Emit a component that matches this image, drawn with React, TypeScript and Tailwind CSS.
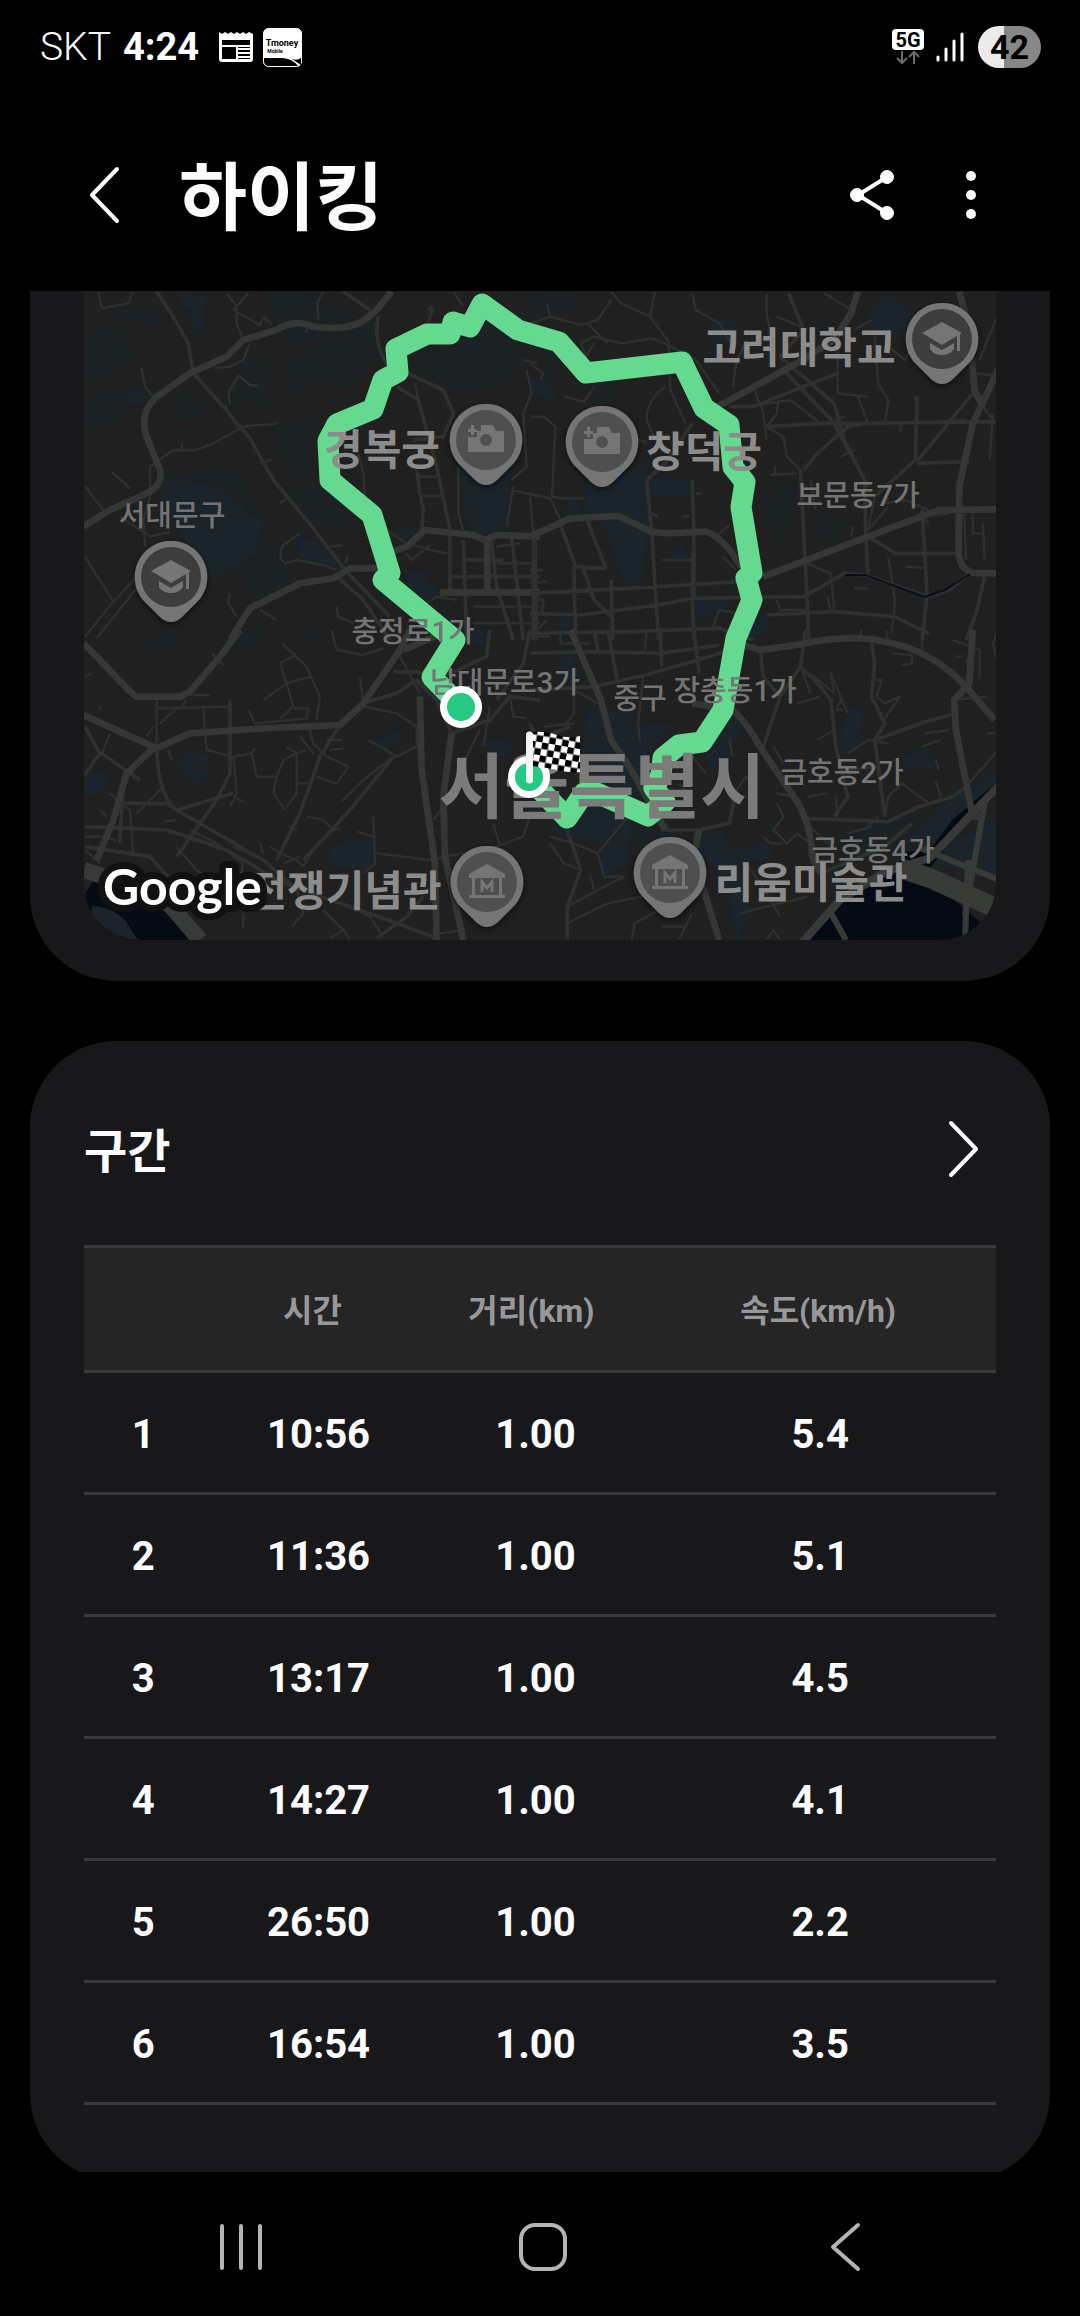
import type { ReactNode } from 'react';
import { clsx } from 'clsx';

const SECTIONS = [
  { no: 1, time: '10:56', distance: '1.00', speed: '5.4' },
  { no: 2, time: '11:36', distance: '1.00', speed: '5.1' },
  { no: 3, time: '13:17', distance: '1.00', speed: '4.5' },
  { no: 4, time: '14:27', distance: '1.00', speed: '4.1' },
  { no: 5, time: '26:50', distance: '1.00', speed: '2.2' },
  { no: 6, time: '16:54', distance: '1.00', speed: '3.5' },
];

const ROUTE =
  '461,707 432,677 455,640 383,580 390,573 372,515 330,480 328,441 337,424 373,409 383,380 398,372 396,349 427,334 450,334 453,322 470,327 482,304 518,330 559,342 586,373 682,362 704,408 729,425 733,467 745,482 741,507 752,573 746,578 752,600 736,638 723,710 702,742 679,745 663,758 661,775 654,788 665,802 648,816 597,793 584,793 567,818 547,797 529,777';

// Each tile covers one quarter of the map and keeps its own coordinates.
const TILES = [
  {
    transform: 'translate(30 280) scale(.3333)',
    parks: [
      'M450 40L530 50 520 160 495 165 480 90 450 75z',
      'M300 325L350 335 340 375 295 370z',
      'M400 600L440 590 500 610 560 620 620 660 650 695 700 730 680 790 690 820 600 870 540 900 520 850 440 740 390 640z',
      'M805 770L860 790 920 850 935 880 870 850 820 840z',
      'M1290 570L1445 570 1425 740 1390 770 1310 740z',
      'M1090 760L1150 735 1165 745 1125 780z',
      'M1125 870L1180 880 1230 940 1180 965 1135 935z',
      'M1480 285L1525 300 1530 340 1500 320z',
    ],
    woods: [
      'M165 180L220 130 280 160 320 230 250 270 200 310 165 290z',
      'M230 90L370 80 400 140 330 130 260 110z',
      'M720 90L870 60 960 110 930 170 780 190 740 150z',
      'M850 200L1040 130 1050 230 960 330 860 300 780 340 770 260z',
      'M1140 240L1440 120 1500 230 1420 320 1260 330 1180 270z',
      'M640 230L720 260 700 380 640 360 600 410z',
      'M430 330L520 380 500 430 440 410z',
      'M740 450L860 400 880 560 790 600 750 520z',
      'M620 760L760 790 790 900 700 960 620 900z',
      'M700 40L860 40 850 90 740 110z',
      'M165 380L230 330 300 360 260 430 180 440z',
      'M430 590L600 560 700 700 690 780 620 640 500 660z',
      'M780 640L870 620 960 680 940 760 850 720z',
    ],
    major: [
      'M160 740L240 690 340 645Q400 620 390 570L350 470Q325 400 380 350L480 280 590 230 640 180 740 150Q790 115 850 140Q960 155 1010 115L1040 90 1085 35',
      'M600 1080L660 985 810 910 910 895 960 865 1050 865',
      'M1045 830L1130 800 1185 750 1330 765 1365 780 1400 765 1530 770',
      'M1372 770L1372 940M1230 937L1530 937',
    ],
    mid: [
      'M380 35L430 110 475 190 490 280 580 380 660 475 730 600 850 745 945 870 1080 1010',
      'M1045 110Q1030 190 1070 250L1240 330 1270 400 1240 470 1150 480',
      'M940 35L1020 90',
      'M1100 320L1165 360 1220 560 1260 750 1260 940',
      'M1160 570L1170 640 1180 690 1175 750',
      'M1300 780L1310 1080M1385 780L1400 920 1450 1080M1445 770L1480 1080M1515 770L1520 1080',
      'M920 890L1000 960 1080 1080',
      'M1260 890L1530 890M1300 840L1420 840',
    ],
    minor: [
      'M205 35L215 85 295 70 308 35',
      'M335 265L345 320 370 350M600 370L595 340 625 285 660 315 685 318',
      'M585 375L620 440M360 560L430 510 500 510 550 490 640 440 745 430',
      'M245 575L300 625M165 620L220 690M165 830L250 965 330 880M165 1070L250 965M200 1075L340 900',
      'M360 560L360 650 340 720 345 800M270 710L360 770 420 755',
      'M555 265L600 260 640 240 660 190M590 40L620 80 620 130 640 180',
      'M655 40L610 90 690 135 700 110 725 135M865 120L862 70 880 35M830 140L830 160',
      'M1190 85L1210 90 1195 125 1205 75M1270 35L1300 80M1155 310L1165 360',
      'M985 520L1000 580 1005 660M810 760L760 795Q740 830 765 850L800 840 880 855 920 870',
      'M900 800L935 795M945 850L955 830M750 670L780 650M690 550L725 540M455 490L455 510',
      'M600 940L595 970 620 1010M690 990L740 1020M920 980L925 1010 970 1030',
      'M1480 240L1520 250M1490 270L1505 340 1480 400 1490 560 1445 600M1445 630L1530 650',
      'M1070 750L1130 790 1200 810 1250 820M1130 820L1145 840 1200 795M1190 970L1220 950 1280 960',
      'M1160 590L1220 590M1175 648L1240 648M1400 800L1470 790M1400 850L1520 850M1330 980L1530 980M1330 1030L1530 1030',
      'M1285 560L1285 700 1300 750M1450 620L1430 740M1500 650L1510 760',
    ],
  },
  {
    transform: 'translate(530 280) scale(.338 .3333)',
    parks: [
      'M1010 90L1060 40 1110 80 1150 130 1110 170 1040 150 1000 140z',
      'M175 600L345 550 350 740 330 910 280 915 250 830 220 740 160 690z',
      'M355 590L470 600 480 650 355 650z',
      'M420 810L445 790 475 835 415 835z',
      'M0 300L60 310 80 360 20 350z',
      'M485 965L590 965 580 1000 500 1010z',
      'M640 1005L690 1000 715 1030 700 1060 640 1075z',
      'M90 1005L120 1010 115 1055 88 1055z',
      'M530 110L620 130 610 180 540 190z',
      'M110 660L145 655 150 710 110 705z',
    ],
    woods: [
      'M0 40L140 40 130 80 0 120z',
      'M180 310L250 300 240 370 190 370z',
      'M700 660L780 600 770 760 740 770 700 710z',
      'M845 690L930 740 880 790 850 760z',
      'M40 230L80 220 70 310 30 300z',
    ],
    major: [
      'M1385 270L1310 430 1270 620 1268 820Q1275 875 1320 880L1385 880',
      'M1270 35L1300 150 1315 330 1340 380',
      'M0 770L120 715 260 708 360 755 400 760 520 755Q570 770 625 860',
      'M690 890L1000 770 1210 690 1385 688',
      'M555 380L780 255 900 180 950 100 970 35',
    ],
    mid: [
      'M0 940L380 920 620 905M0 1000L150 1005 380 975 480 955 810 950 930 880 990 885 1180 950 1240 930 1300 880',
      'M345 600L360 755 380 1080M240 900L245 1080M130 860L135 1080M10 760L10 1080',
      'M480 600L485 755 480 960 485 1080M345 600L400 550 480 430',
      'M85 720L135 860 225 865M155 860L190 960 240 1010M165 710L225 865',
      'M765 40L810 150 740 230 900 370 930 480 990 600 993 760 1000 890',
      'M750 270L900 430 1000 620M590 380L660 380 910 280',
      'M700 440L860 430 1000 430 1385 425M810 570L850 520 940 440 990 430',
      'M1000 770L1080 820 1260 820M1145 545L1310 340M1145 550L1300 545M1145 350L1140 540 1020 650',
      'M800 570L820 960 825 1080M1345 890L1320 1000 1290 1080M1160 690L1175 940 1160 1080',
      'M485 755L485 960M0 1060L300 1055 560 1045 660 1080M700 1005L900 995 1080 1010 1180 1060',
    ],
    minor: [
      'M240 35L270 70 355 110 370 35M355 110L410 185 415 330 460 430',
      'M50 70L60 110 150 135 200 120 240 60M60 110L0 130M150 190L190 170 270 190 360 175 410 195 490 240 560 340',
      'M150 190L165 230 190 190M170 130L230 190M100 350L160 365 190 320M0 410L40 410 75 440 65 650',
      'M0 250L40 280 30 300M345 420Q345 360 400 320M345 420L370 480',
      'M480 40L490 90 560 130 600 200M700 40L700 100 720 200M870 40L950 90M730 110L800 140',
      'M600 320L610 250 640 180M665 330L690 400 700 480M735 360L730 400 700 440 750 470 760 530 800 570',
      'M1020 170L1030 310 1060 360 1050 430M910 200L910 340 1000 350M960 150L1010 120M1060 200L1110 240 1130 200',
      'M970 350L1000 430M840 320L900 370M640 380L770 360 860 430M1140 350L1145 420M1100 425L1095 455M900 420L930 410M920 530L960 510',
      'M360 700L380 710M450 710L475 708M490 640L510 640M710 585L790 580M725 560L725 585M550 770L590 735M570 830L610 870M810 800L810 820',
      'M65 650L100 655 160 655M0 640L60 655 90 720M0 910L50 905M0 870L40 870M830 600L845 690M955 740L950 770',
      'M1285 700L1290 840M1310 700L1310 760 1340 760M1340 730L1345 840M1110 860L1170 865M1050 670L1110 660 1200 700M1150 700L1180 730M1060 830L1080 960M960 925L1000 925',
      'M820 850L890 880 900 990M730 960L740 990 820 990M540 1045L560 990 640 1005M1240 700L1160 710M1385 100L1330 240M1310 280L1370 285 1385 250M1310 340L1370 420',
      'M390 840L480 840M320 480L345 485M880 950L890 1000M1080 960L1070 1060M10 960L40 960 35 1000M20 1050L50 1020',
      'M1370 400L1360 540M1290 420L1200 425M1020 650L1000 750 1060 680',
    ],
  },
  {
    transform: 'translate(30 630) scale(.3333)',
    parks: [
      'M440 400L480 365 540 375 530 420 545 435 510 465 440 420z',
      'M900 660L950 630 1030 620 1025 690 1035 710 950 720 895 700z',
      'M165 440L215 420 245 455 200 500 160 490z',
      'M1045 330L1110 300 1110 330 1070 355 1040 345z',
      'M1150 160L1190 150 1205 210 1170 205z',
      'M1370 335L1420 325 1460 355 1420 385 1375 365z',
      'M1310 0L1360 0 1365 45 1310 45z',
    ],
    woods: ['M330 60L400 0 430 0 440 60 380 60z', 'M600 60L650 0 710 0 690 40z', 'M790 0L880 0 870 30z'],
    major: [
      'M160 40L200 80 300 185 320 200 450 200 480 185 570 80 630 0',
      'M160 255L380 355 480 310 700 295 930 285 1000 220 1110 60 1140 0',
      'M370 355L290 430 250 570 200 690',
      'M1170 200L1175 420 1215 700 1220 930M1240 500L1245 680 1300 930',
      'M1260 0L1120 60M1265 310L1240 500',
    ],
    mid: [
      'M165 590L410 600 590 660 760 760 1100 880 1220 925',
      'M380 355Q385 500 440 540L700 690 800 780M930 285L870 380 810 550 740 690',
      'M1000 220L1100 190 1160 150 1220 210 1265 310M1265 310L1380 270 1440 200 1530 210',
      'M270 520L410 520 440 540 610 490M280 440L270 640',
      'M1040 925L1130 860 1180 800M440 770L360 680 165 650',
      'M1380 0L1370 80 1260 130 1090 125M1500 0L1480 100 1400 210',
      'M440 680L560 510 600 430 600 220M820 690L960 540 1090 380',
      'M165 290L210 370 160 440M215 370L330 450',
    ],
    minor: [
      'M380 210L380 350M380 235L600 230M465 210L460 235M390 280L440 235M520 235L530 360 610 380 620 490 600 530M610 500L640 515',
      'M540 195L480 195M600 210L600 250M545 70L580 105M165 140L185 130M210 230L210 240',
      'M750 100L795 75 760 45 830 110 870 200 860 270M750 100L770 160 790 230 750 265M770 160L840 140M700 210L770 160M655 240L675 280 830 265 835 235 790 235',
      'M610 380L665 370 675 355M665 370L680 440 740 440 760 390 800 370 830 360M740 440L730 490 765 540M800 370L800 490 770 530M800 460L835 460',
      'M835 285L850 340 890 380 955 410 920 460 860 440M890 330L935 330M900 360L940 355M770 350L800 370M810 320L850 370',
      'M1000 230L1100 250 1160 290 1160 350 1100 380 1060 355 1015 330M1090 380L1000 450 935 515M990 140L1000 220',
      'M830 560L880 570 910 600 850 660 820 710M910 600L930 595M1030 560L1035 700 1000 730M980 605L1030 620M1040 670L1200 690 1400 650 1480 620 1500 560',
      'M165 620L220 620 260 630M240 490L300 540 310 680M320 550L400 470M165 660L210 700M210 540L230 560',
      'M260 310L280 320M240 310L215 370M415 360L425 390M350 320L370 290',
      'M610 650L700 690M720 650L750 670 800 690 820 710M700 670L690 640M760 700L810 680M780 590L800 600',
      'M800 780L820 850 785 890M640 850L640 895M880 840L940 900 960 930M940 900L900 925M960 830L1020 860 1060 920M1230 910L1300 900',
      'M440 570L400 575M440 650L500 720 560 770M560 640L640 700 620 800M480 600L560 640',
      'M905 0L920 60 1000 75 1060 55M1110 80L1170 190M1380 230L1360 350M1440 200L1450 260 1490 265M1390 580L1410 650M1350 300L1290 420 1270 500M1210 570L1250 520',
    ],
  },
  {
    transform: 'translate(530 630) scale(.338 .3333)',
    parks: [
      'M90 80L120 60 150 140 130 180 90 110z',
      'M170 250L310 240 300 300 380 280 430 290 350 360 300 560 290 700 215 740 210 640 120 620 50 600 130 560 200 500 150 380z',
      'M590 260L630 290 590 380 530 430 520 380z',
      'M940 235L985 235 980 310 965 360 920 365 920 320z',
      'M1100 380L1190 350 1180 390 1200 410 1120 420z',
      'M510 610L560 600 600 660 700 640 720 680 620 700 600 640 640 780 660 860 610 925 590 800 540 700 500 670z',
      'M1280 620L1385 560 1385 740 1180 700z',
      'M1270 480L1385 430 1385 470 1200 640 1100 640 1160 590z',
    ],
    woods: ['M300 620L440 560 420 680 330 700z', 'M880 640L1060 570 1230 530 1160 640 990 680z', 'M250 530L340 500 330 640z', 'M690 590L740 530 720 620z'],
    major: [
      'M480 220L600 240Q650 290 680 350L780 500Q830 570 835 680L860 730',
      'M500 600L485 680 520 800 560 930',
      'M620 40L680 60 790 45Q940 10 1050 35Q1190 60 1290 170L1375 270',
      'M1310 0L1300 160 1255 210 1260 300 1310 560 1340 560',
      'M120 0L210 210 240 330 300 420 400 600',
    ],
    mid: [
      'M0 180L190 170 340 135 480 95 620 50M0 70L180 65 390 70 560 45',
      'M230 0L260 160M385 0L390 110M485 0L500 130M190 0L200 60',
      'M815 0L800 110 740 200 690 350M740 200L690 140 680 50M800 110L860 170 890 210 905 350 940 500 900 560',
      'M820 565L1060 575 1150 530 1250 500 1290 470M1020 330L1170 275 1260 250',
      'M400 600L500 600 590 580 610 480M110 600L150 720 110 830 110 930',
      'M1010 40L1020 100 1010 200 1050 280 1020 330 1050 560',
      'M860 730L1050 650 1130 580M0 280L20 330 120 290',
    ],
    minor: [
      'M1160 0L1160 60M1055 0L1055 40M980 0L975 30M345 0L340 60M90 0L90 40 180 40M0 20L60 20',
      'M335 140L320 280 325 335M200 220L130 180 130 250 100 290M40 290L130 280',
      'M1020 150L1040 150 1025 200 1050 220 1095 200 1050 265M1070 70L1130 75 1130 100 1100 105M1250 30L1330 60 1330 140M1260 80L1280 80M1310 40L1290 100',
      'M830 130L900 190 890 130 940 250M800 110L830 190M790 220L860 200M920 210L905 240 925 240',
      'M940 370L1000 330 1060 340M850 330L900 300M940 420L1030 410M1170 310L1240 300M1160 350L1215 330M1200 390L1210 420M1350 310L1385 310M1250 210L1350 200',
      'M610 480L640 440 660 470M730 490L780 500M730 520L750 560 720 600 760 640 790 610 830 640M690 620L710 640 750 640M905 500L910 560M820 500L880 490M990 600L1030 560M940 610L1010 590',
      'M60 620L130 640 200 670 220 740 280 740M200 670L290 560M60 640L100 700 150 720M180 740L190 780M110 830L220 770 280 740',
      'M110 880L230 820 330 800M300 930L310 880 400 830 470 790M390 890L460 890M440 930L480 850M700 930L720 900 740 930M640 700L700 790 740 860M620 850L700 830 820 800',
      'M1050 560L1060 500 1100 460 1180 520M1215 500L1200 450M1385 360L1290 470M1385 0L1370 40 1385 110',
      'M480 380L520 430M440 460L460 480M590 330L600 380M720 350L750 400M830 590L880 640 900 620',
    ],
  },
];

type LabelSpec = { text: string; x: number; y: number; kind: 'place' | 'district' | 'city' };

// x is the middle of the label, y its baseline.
const LABELS: LabelSpec[] = [
  { text: '서울특별시', x: 602, y: 812, kind: 'city' },
  { text: '서대문구', x: 172, y: 526, kind: 'district' },
  { text: '보문동7가', x: 858, y: 506, kind: 'district' },
  { text: '충정로1가', x: 413, y: 642, kind: 'district' },
  { text: '남대문로3가', x: 505, y: 693, kind: 'district' },
  { text: '중구', x: 640, y: 709, kind: 'district' },
  { text: '장충동1가', x: 735, y: 701, kind: 'district' },
  { text: '금호동2가', x: 842, y: 783, kind: 'district' },
  { text: '금호동4가', x: 873, y: 861, kind: 'district' },
  { text: '고려대학교', x: 799, y: 363, kind: 'place' },
  { text: '경복궁', x: 382, y: 465, kind: 'place' },
  { text: '창덕궁', x: 704, y: 467, kind: 'place' },
  { text: '전쟁기념관', x: 345, y: 906, kind: 'place' },
  { text: '리움미술관', x: 811, y: 898, kind: 'place' },
];

function SchoolGlyph() {
  return (
    <g fill="#757575">
      <path d="M0-17L20-6 0 6-20-6z" />
      <path d="M-12 4L0 11 12 4V10Q8 16 0 16T-12 10z" />
      <path d="M15-5H18V12H15z" />
    </g>
  );
}

function CameraGlyph() {
  return (
    <g fill="#757575">
      <path fillRule="evenodd" d="M-18 12V-3H-9V-9H-5V-15H7L10-9H18V12zM0-6A6 6 0 1 0 0 6 6 6 0 1 0 0-6z" />
      <path d="M-15-15H-12V-11H-9V-8H-12V-5H-15V-8H-18V-11H-15z" />
    </g>
  );
}

function MuseumGlyph() {
  return (
    <g fill="#757575">
      <path d="M0-18L18-8V-4H-18V-8z" />
      <path d="M-15-5H-12V13H-15zM12-5H15V13H12zM-18 13H18V16H-18z" />
      <path d="M-5 10V0L0 6 5 0V10" fill="none" stroke="#757575" strokeWidth="3" />
    </g>
  );
}

function Pin({ x, y, dark, children }: { x: number; y: number; dark?: boolean; children: ReactNode }) {
  return (
    <g transform={`translate(${x} ${y})`} filter="url(#pin-shadow)">
      <path d="M0-36A36 36 0 0 1 28 23L11 40Q0 50-11 40L-28 23A36 36 0 0 1 0-36z" fill="#757575" />
      <circle r="30" fill={dark ? '#3d3d3d' : '#505050'} />
      {children}
    </g>
  );
}

function RouteMap() {
  return (
    <svg
      viewBox="84 291 912 649"
      className="block w-full rounded-b-[56px] bg-[#202020]"
      role="img"
      aria-label="하이킹 경로"
    >
      <defs>
        <filter id="pin-shadow" x="-30%" y="-30%" width="160%" height="160%">
          <feDropShadow dx="0" dy="2" stdDeviation="3" floodColor="#000" floodOpacity="0.6" />
        </filter>
        <pattern id="checker" width="13" height="13" patternUnits="userSpaceOnUse" patternTransform="rotate(10)">
          <path d="M0 0H13V13H0z" fill="#fff" />
          <path d="M0 0H6.5V6.5H0zM6.5 6.5H13V13H6.5z" fill="#000" />
        </pattern>
      </defs>

      {TILES.map((tile) => (
        <g key={tile.transform} transform={tile.transform}>
          <path d={tile.woods.join('')} fill="#1c2223" />
          <path d={tile.parks.join('')} fill="#1a242a" />
        </g>
      ))}
      <g fill="#060a15">
        <path d="M86 892L94 880 166 900 180 915 188 940H84z" />
        <path d="M806 940L830 908 880 875 925 876 996 935V940z" />
        <path d="M930 850L952 820 996 783V795L950 842 930 868 890 880 905 852z" />
      </g>
      <path d="M92 906Q110 906 125 920L138 940H110L92 922z" fill="#1a242a" />
      <g fill="none" stroke="#383a37" strokeLinejoin="round">
        <path d="M84 870L130 885 170 905 200 940" strokeWidth="16" />
        <path d="M800 945L840 900 885 872 930 858 985 800 1000 785" strokeWidth="8" />
        <path d="M900 868L930 878 1000 910" strokeWidth="20" />
        <path d="M920 848L1000 880M965 915L985 800M968 860L965 940M828 908L846 940" strokeWidth="6" />
      </g>

      {TILES.map((tile) => (
        <g key={tile.transform} transform={tile.transform} fill="none" strokeLinejoin="round">
          <path d={tile.minor.join('')} stroke="#2e302e" strokeWidth="7" />
          <path d={tile.mid.join('')} stroke="#2f312e" strokeWidth="11" />
          <path d={tile.major.join('')} stroke="#353734" strokeWidth="20" />
        </g>
      ))}
      <path d="M845 575L865 575 925 597 945 590 970 574" fill="none" stroke="#0a0e1a" strokeWidth="2" />

      <polyline points={ROUTE} fill="none" stroke="#65d990" strokeWidth="21" strokeLinejoin="round" />

      {LABELS.map(({ text, x, y, kind }) => (
        <text
          key={text}
          x={x}
          y={y}
          textAnchor="middle"
          className={clsx(
            kind === 'city' && 'fill-[#7b7b7b] text-[71px] font-bold',
            kind === 'district' && 'fill-[#747474] text-[29px] font-medium',
            kind === 'place' && 'fill-[#8c8c8c] text-[42px] font-bold',
          )}
        >
          {text}
        </text>
      ))}

      <Pin x={942} y={339} dark><SchoolGlyph /></Pin>
      <Pin x={171} y={577} dark><SchoolGlyph /></Pin>
      <Pin x={486} y={440}><CameraGlyph /></Pin>
      <Pin x={602} y={442}><CameraGlyph /></Pin>
      <Pin x={487} y={882}><MuseumGlyph /></Pin>
      <Pin x={670} y={873}><MuseumGlyph /></Pin>

      <g fill="#24c982" stroke="#fff" strokeWidth="7">
        <circle cx="461" cy="707" r="17.5" />
        <circle cx="529" cy="777" r="17.5" />
      </g>
      <path d="M532 732Q546 731 557 735T580 736V772Q570 773 557 770T532 766z" fill="url(#checker)" />
      <path d="M529.500 735V780" stroke="#f4f4f4" strokeWidth="7" strokeLinecap="round" />

      <text
        x="103"
        y="905"
        fill="#fff"
        stroke="#111"
        strokeWidth="14"
        strokeLinejoin="round"
        paintOrder="stroke"
        className="font-['Lato','Noto_Sans',sans-serif] text-[50px] font-bold"
      >
        Google
      </text>
    </svg>
  );
}

function StatusBar() {
  return (
    <div className="flex h-[94px] items-center justify-between pr-[39px] pl-10">
      <div className="flex items-center">
        <span className="text-[39px] leading-none font-light">SKT</span>
        <span className="ml-3 text-[38px] leading-none font-bold">4:24</span>
        <svg width="34" height="30" viewBox="0 0 34 30" className="ml-5" aria-hidden="true">
          <path d="M0 0L3 2 6 0 9 2 12 0 15 2 18 0 21 2 24 0 27 2 30 0 34 2V27Q34 30 31 30H3Q0 30 0 27z" fill="#fff" />
          <path d="M3 8H31V13H3zM3 15H17V27H3zM19 15H31V16H19zM19 18H31V20H19zM19 22H31V24H19zM19 26H31V27H19z" fill="#000" />
        </svg>
        <svg width="39" height="39" viewBox="0 0 39 39" className="ml-2.5" aria-hidden="true">
          <rect x=".5" y=".5" width="38" height="38" rx="5" fill="#fff" stroke="#fff" />
          <path d="M1 30H20Q30 31 35 38H6Q1 38 1 33zM29 31Q34 33 38 30V37Z" fill="#000" />
          <text x="19" y="18" textAnchor="middle" className="text-[9px] font-bold">Tmoney</text>
          <text x="12" y="25" textAnchor="middle" className="text-[5px] font-bold">Mobile</text>
        </svg>
      </div>
      <div className="flex items-center">
        <div className="flex flex-col items-center">
          <span className="flex h-[21px] w-8 items-center justify-center rounded bg-white text-[20px] leading-none font-bold text-black">
            5G
          </span>
          <svg width="24" height="15" viewBox="0 0 24 15" fill="none" stroke="#6b6b6b" strokeWidth="2" aria-hidden="true">
            <path d="M6 1V13M1 8L6 13 11 8M18 14V2M13 7L18 2 23 7" />
          </svg>
        </div>
        <svg width="28" height="30" viewBox="0 0 28 30" className="ml-3" stroke="#fff" strokeWidth="3" strokeLinecap="round" aria-hidden="true">
          <path d="M2 25V28M10 17V28M18 9V28M26 2V28" />
        </svg>
        <span className="ml-3.5 flex h-[42px] w-[63px] items-center justify-center rounded-full bg-linear-to-r from-[#ebebeb] from-42% to-[#878787] to-42% text-[34px] leading-none font-bold text-black">
          42
        </span>
      </div>
    </div>
  );
}

function TopBar() {
  return (
    <header className="flex h-[197px] items-center pt-1 pr-[100px] pl-[82px]">
      <button type="button" aria-label="뒤로" className="flex w-11 justify-center">
        <svg width="32" height="58" viewBox="0 0 32 58" fill="none" stroke="#fcfcff" strokeWidth="4" strokeLinecap="round" strokeLinejoin="round">
          <path d="M29 3L4 29 29 55" />
        </svg>
      </button>
      <h1 className="ml-[53px] pt-2 text-[74px] leading-none font-bold text-[#fcfcff]">하이킹</h1>
      <button type="button" aria-label="공유" className="ml-auto">
        <svg width="44" height="52" viewBox="0 0 44 52" fill="#fcfcff" stroke="#fcfcff">
          <path d="M37 8L8 26 37 44" fill="none" strokeWidth="4" />
          <circle cx="37" cy="8" r="6.500" />
          <circle cx="7" cy="26" r="6.500" />
          <circle cx="37" cy="44" r="6.500" />
        </svg>
      </button>
      <button type="button" aria-label="더보기" className="ml-[68px]">
        <svg width="18" height="52" viewBox="0 0 18 52" fill="#fcfcff">
          <circle cx="9" cy="7" r="5" />
          <circle cx="9" cy="26" r="5" />
          <circle cx="9" cy="45" r="5" />
        </svg>
      </button>
    </header>
  );
}

function SectionTable() {
  return (
    <table className="w-full table-fixed border-collapse text-center">
      <colgroup>
        <col className="w-[13%]" />
        <col className="w-[25%]" />
        <col className="w-[23%]" />
        <col className="w-[39%]" />
      </colgroup>
      <thead>
        <tr className="h-[125px] border-y-3 border-[#3a3a3c] bg-[#252525] text-[32px] text-[#98989b]">
          <th scope="col" aria-label="번호" />
          <th scope="col" className="pt-1 pr-2 font-bold">시간</th>
          <th scope="col" className="pt-1 pr-2 font-bold">거리(km)</th>
          <th scope="col" className="pt-1 font-bold">속도(km/h)</th>
        </tr>
      </thead>
      <tbody className="text-[40px] text-[#fcfcff]">
        {SECTIONS.map((s) => (
          <tr key={s.no} className="h-[122px] border-b-3 border-[#3a3a3c]">
            <th scope="row" className="pt-1 font-bold">{s.no}</th>
            <td className="pt-1 pl-1 font-bold">{s.time}</td>
            <td className="pt-1 font-bold">{s.distance}</td>
            <td className="pt-1 pl-1 font-bold">{s.speed}</td>
          </tr>
        ))}
      </tbody>
    </table>
  );
}

function NavBar() {
  return (
    <nav className="grid h-36 grid-cols-3 place-items-center bg-black pt-1.5 pr-[84px] pl-[90px]">
      <button type="button" aria-label="최근 앱">
        <svg width="46" height="50" viewBox="0 0 46 50" stroke="#b4b4b4" strokeWidth="4" strokeLinecap="round">
          <path d="M4 4V46M23 4V46M42 4V46" />
        </svg>
      </button>
      <button type="button" aria-label="홈">
        <svg width="50" height="50" viewBox="0 0 50 50" fill="none" stroke="#b4b4b4" strokeWidth="4">
          <rect x="3" y="3" width="44" height="44" rx="14" />
        </svg>
      </button>
      <button type="button" aria-label="뒤로">
        <svg width="32" height="50" viewBox="0 0 32 50" fill="none" stroke="#b4b4b4" strokeWidth="4" strokeLinecap="round" strokeLinejoin="round">
          <path d="M29 3L4 25 29 47" />
        </svg>
      </button>
    </nav>
  );
}

export default function App() {
  return (
    <div className="flex min-h-screen flex-col bg-black font-['Roboto','Noto_Sans_CJK_KR',sans-serif] text-white">
      <StatusBar />
      <TopBar />
      <main className="flex flex-1 flex-col gap-[60px] overflow-hidden px-[30px]">
        <section className="rounded-b-[86px] bg-[#18181a] px-[54px] pb-[41px]">
          <RouteMap />
        </section>
        <section className="-mb-2 rounded-[86px] bg-[#18181a] px-[54px] pb-[75px]">
          <div className="flex h-[204px] items-center justify-between pt-3 pr-4">
            <h2 className="pt-1 text-[47px] leading-none font-bold text-[#fcfcff]">구간</h2>
            <button type="button" aria-label="구간 자세히">
              <svg width="32" height="58" viewBox="0 0 32 58" fill="none" stroke="#fcfcff" strokeWidth="4" strokeLinecap="round" strokeLinejoin="round">
                <path d="M3 3L28 29 3 55" />
              </svg>
            </button>
          </div>
          <SectionTable />
        </section>
      </main>
      <NavBar />
    </div>
  );
}
